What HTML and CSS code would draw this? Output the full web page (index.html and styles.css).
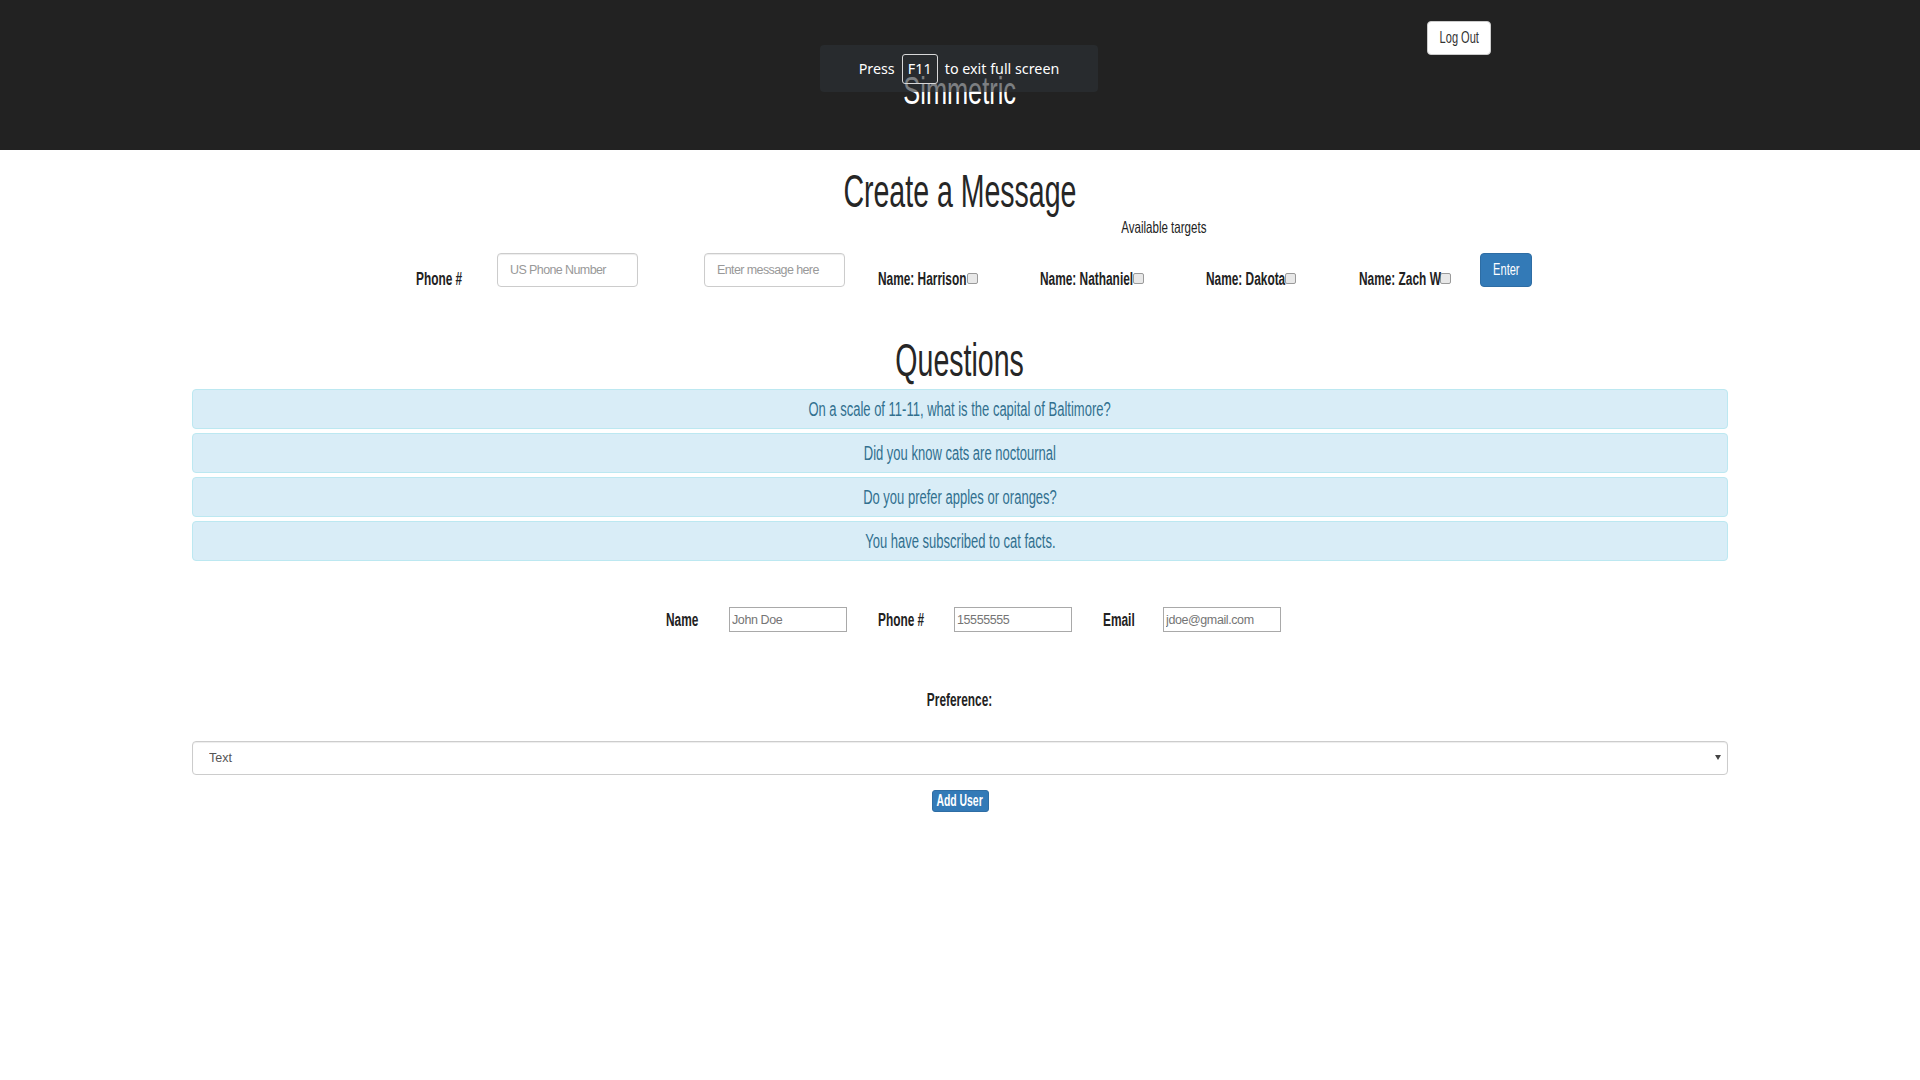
FILE: index.html
```html
<!DOCTYPE html>
<html lang="en">
<head>
<meta charset="utf-8">
<title>Simmetric</title>
<link rel="stylesheet" href="styles.css">
</head>
<body>
<header class="topbar">
  <div class="topbar-actions"><button class="btn btn-default" type="button"><span class="sx">Log Out</span></button></div>
  <h1 class="brand"><span class="sx">Simmetric</span></h1>
  <div class="fs-toast"><span>Press</span><kbd>F11</kbd><span>to exit full screen</span></div>
</header>
<main class="page">
  <h1 class="page-title"><span class="sx">Create a Message</span></h1>
  <div class="targets-label"><span class="sx">Available targets</span></div>
  <form class="msg-row">
    <label class="lbl"><span class="sx sx-l">Phone #</span></label>
    <div><input class="form-control w141" type="text" placeholder="US Phone Number"></div>
    <div><input class="form-control w141" type="text" placeholder="Enter message here"></div>
    <label class="lbl target"><span class="sx sx-l t1">Name: Harrison</span><input class="cb" type="checkbox"></label>
    <label class="lbl target"><span class="sx sx-l t2">Name: Nathaniel</span><input class="cb" type="checkbox"></label>
    <label class="lbl target"><span class="sx sx-l t3">Name: Dakota</span><input class="cb" type="checkbox"></label>
    <label class="lbl target"><span class="sx sx-l t4">Name: Zach W</span><input class="cb" type="checkbox"></label>
    <button class="btn btn-primary" type="button"><span class="sx">Enter</span></button>
  </form>
  <h1 class="section-title"><span class="sx">Questions</span></h1>
  <div class="questions">
    <div class="alert-info"><span class="sx">On a scale of 11-11, what is the capital of Baltimore?</span></div>
    <div class="alert-info"><span class="sx">Did you know cats are noctournal</span></div>
    <div class="alert-info"><span class="sx">Do you prefer apples or oranges?</span></div>
    <div class="alert-info"><span class="sx">You have subscribed to cat facts.</span></div>
  </div>
  <form class="user-row">
    <label class="lbl"><span class="sx sx-l">Name</span></label>
    <div><input class="plain-input" type="text" placeholder="John Doe"></div>
    <label class="lbl"><span class="sx sx-l">Phone #</span></label>
    <div><input class="plain-input" type="text" placeholder="15555555"></div>
    <label class="lbl"><span class="sx sx-l">Email</span></label>
    <div><input class="plain-input" type="text" placeholder="jdoe@gmail.com"></div>
  </form>
  <div class="pref-label"><span class="sx">Preference:</span></div>
  <div class="select-wrap">
    <select class="pref-select"><option>Text</option><option>Email</option></select>
    <svg class="caret" width="6" height="5" viewBox="0 0 6 5"><path d="M0 0H6L3 5Z" fill="#444"/></svg>
  </div>
  <div class="add-wrap"><button class="btn-add" type="button"><span class="sx">Add User</span></button></div>
</main>
</body>
</html>
```
FILE: styles.css
```css
* { box-sizing: border-box; }
html, body { margin: 0; padding: 0; background: #fff; }
body {
  font-family: "Liberation Sans", Arial, sans-serif;
  color: #333;
  font-size: 14px;
}
button, input, select { font-family: inherit; }

/* condensed look: real text, squeezed horizontally */
.sx {
  display: inline-block;
  white-space: nowrap;
  transform: scaleX(var(--sx, .65));
}
.sx-l { transform-origin: 0 50%; }

/* header */
.topbar {
  position: relative;
  height: 150px;
  background: #222;
}
.topbar-actions {
  display: flex;
  justify-content: flex-end;
  padding: 21px 429px 0 0;
}
.btn {
  height: 34px;
  padding: 0;
  border-radius: 4px;
  border: 1px solid transparent;
  cursor: pointer;
  display: flex;
  align-items: center;
  justify-content: center;
  font-size: 17px;
}
.btn-default { background: #fff; color: #333; border-color: #ccc; width: 64px; }
.btn-primary { background: #337ab7; color: #fff; border-color: #2e6da4; width: 52px; margin-top: -1px; }
.brand {
  margin: 14px 0 0;
  text-align: center;
  color: #fff;
  font-size: 39px;
  line-height: 44px;
  font-weight: 400;
}
.fs-toast {
  position: absolute;
  left: 820px;
  top: 45px;
  width: 278px;
  height: 47px;
  border-radius: 4px;
  background: rgba(44, 48, 53, 0.62);
  color: #fff;
  font-family: "Noto Sans", "Open Sans", sans-serif;
  font-size: 14.3px;
  display: flex;
  align-items: center;
  justify-content: center;
  gap: 7px;
  z-index: 5;
}
.fs-toast kbd {
  font-family: inherit;
  font-size: 14.3px;
  border: 1px solid #d8d8d8;
  border-radius: 3px;
  width: 36px;
  height: 30px;
  display: flex;
  align-items: center;
  justify-content: center;
}

/* main */
.page-title, .section-title {
  margin: 16px 0 0;
  text-align: center;
  font-size: 46px;
  line-height: 50px;
  font-weight: 400;
  color: #262626;
  --sx: .62;
}
.section-title { margin-top: 48px; }
.targets-label {
  margin-top: 1px;
  padding-left: 408px;
  text-align: center;
  font-size: 16.5px;
  line-height: 20px;
  color: #222;
  --sx: .7;
}
.msg-row {
  margin: 16px 0 0;
  display: grid;
  grid-template-columns: 81px 207px 174px 162px 166px 153px 121px 52px;
  padding-left: 416px;
  align-items: end;
  height: 34px;
}
.lbl {
  font-weight: 700;
  font-size: 18px;
  line-height: 18px;
  color: #222;
  white-space: nowrap;
  --sx: .66;
}
.msg-row .lbl { margin-bottom: -1px; }
.target { display: flex; align-items: flex-end; }
.t1 { width: 89px; }
.t2 { width: 93px; }
.t3 { width: 79px; }
.t4 { width: 81px; }
.cb {
  appearance: none;
  -webkit-appearance: none;
  flex: none;
  width: 11px;
  height: 11px;
  margin: 0 0 4px 0;
  border: 1px solid #9a9a9a;
  border-radius: 2px;
  background: #e8e8e8;
}
.form-control {
  display: block;
  height: 34px;
  padding: 6px 12px;
  font-size: 12.5px;
  letter-spacing: -0.6px;
  border: 1px solid #ccc;
  border-radius: 4px;
  box-shadow: inset 0 1px 1px rgba(0,0,0,.075);
  color: #555;
}
.form-control::placeholder { color: #999; }
.w141 { width: 141px; }

.questions {
  width: 80%;
  margin: 4px auto 0;
}
.alert-info {
  background: #d9edf7;
  border: 1px solid #bce8f1;
  color: #31708f;
  border-radius: 4px;
  text-align: center;
  font-size: 20px;
  line-height: 22px;
  padding: 8px 15px;
  margin-bottom: 4px;
  --sx: .65;
}
.alert-info:last-child { margin-bottom: 0; }

.user-row {
  margin: 46px 0 0;
  display: grid;
  grid-template-columns: 63px 149px 76px 149px 60px 120px;
  padding-left: 666px;
  align-items: center;
  height: 25px;
}
.plain-input {
  display: block;
  width: 118px;
  height: 25px;
  padding: 1px 2px;
  border: 1px solid #a9a9a9;
  border-radius: 0;
  font-size: 12.5px;
  letter-spacing: -0.4px;
  color: #333;
}
.plain-input::placeholder { color: #757575; }

.pref-label {
  margin-top: 58px;
  text-align: center;
  font-weight: 700;
  font-size: 18px;
  line-height: 20px;
  color: #222;
  --sx: .66;
}
.select-wrap {
  position: relative;
  width: 80%;
  margin: 31px auto 0;
}
.pref-select {
  appearance: none;
  -webkit-appearance: none;
  display: block;
  width: 100%;
  height: 34px;
  padding: 6px 16px;
  font-size: 12.5px;
  color: #555;
  background: #fff;
  border: 1px solid #ccc;
  border-radius: 4px;
  box-shadow: inset 0 1px 1px rgba(0,0,0,.075);
}
.caret {
  position: absolute;
  right: 7px;
  top: 14px;
  pointer-events: none;
}
.add-wrap {
  margin-top: 15px;
  display: flex;
  justify-content: center;
}
.btn-add {
  background: #337ab7;
  color: #fff;
  border: 1px solid #2e6da4;
  border-radius: 3px;
  font-size: 16px;
  font-weight: 700;
  line-height: 18px;
  padding: 0;
  width: 57px;
  height: 22px;
  display: flex;
  align-items: center;
  justify-content: center;
  --sx: .65;
}
```
